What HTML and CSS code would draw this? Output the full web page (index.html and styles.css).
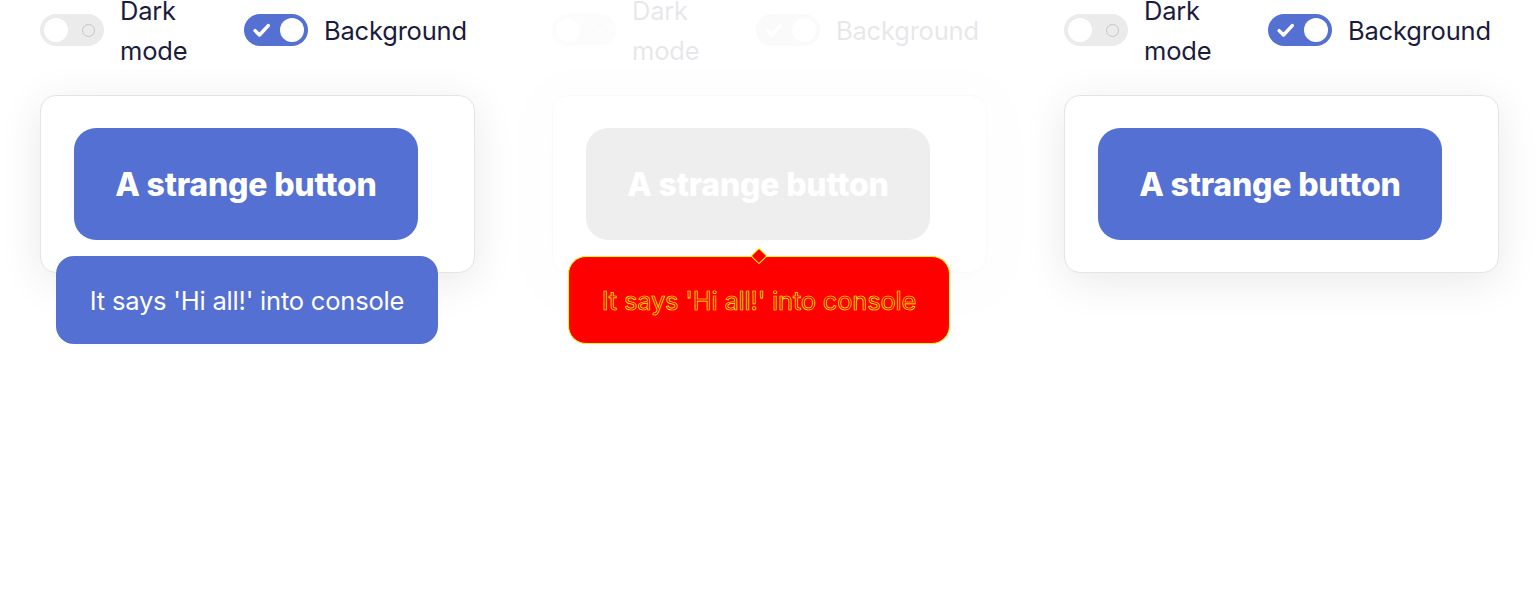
FILE: index.html
```html
<!DOCTYPE html>
<html>
<head>
<meta charset="utf-8">
<link rel="stylesheet" href="styles.css">
</head>
<body>
<div class="panels">
  <section class="panel">
    <div class="toolbar">
      <div class="switch-group">
        <span class="toggle off"><span class="knob"></span><span class="ring"></span></span>
        <span class="label narrow">Dark mode</span>
      </div>
      <div class="switch-group">
        <span class="toggle on"><svg class="check" viewBox="0 0 16 16"><path d="M2.5 8.5 L6 12 L13 4.5"/></svg><span class="knob"></span></span>
        <span class="label">Background</span>
      </div>
    </div>
    <div class="card">
      <button class="btn">A strange button</button>
    </div>
    <div class="tooltip"><span class="arrow"></span>It says 'Hi all!' into console</div>
  </section>

  <section class="panel">
    <div class="faded">
      <div class="toolbar">
        <div class="switch-group">
          <span class="toggle off"><span class="knob"></span><span class="ring"></span></span>
          <span class="label narrow">Dark mode</span>
        </div>
        <div class="switch-group">
          <span class="toggle on gray"><svg class="check" viewBox="0 0 16 16"><path d="M2.5 8.5 L6 12 L13 4.5"/></svg><span class="knob"></span></span>
          <span class="label">Background</span>
        </div>
      </div>
      <div class="card">
        <button class="btn gray">A strange button</button>
      </div>
    </div>
    <div class="tooltip diff"><span class="arrow"></span>It says 'Hi all!' into console</div>
  </section>

  <section class="panel">
    <div class="toolbar">
      <div class="switch-group">
        <span class="toggle off"><span class="knob"></span><span class="ring"></span></span>
        <span class="label narrow">Dark mode</span>
      </div>
      <div class="switch-group">
        <span class="toggle on"><svg class="check" viewBox="0 0 16 16"><path d="M2.5 8.5 L6 12 L13 4.5"/></svg><span class="knob"></span></span>
        <span class="label">Background</span>
      </div>
    </div>
    <div class="card">
      <button class="btn">A strange button</button>
    </div>
  </section>
</div>
</body>
</html>
```
FILE: styles.css
```css
* { box-sizing: border-box; }
html, body { margin: 0; padding: 0; background: #fff; }
body {
  font-family: Inter, "Noto Sans", "Liberation Sans", sans-serif;
  color: #1b1c3b;
  width: 1536px;
  height: 600px;
  overflow: hidden;
}
.panels {
  display: grid;
  grid-template-columns: repeat(3, 512px);
}
.panel {
  position: relative;
  padding-left: 40px;
  height: 600px;
}
.toolbar {
  display: flex;
  align-items: center;
  height: 60px;
  gap: 40px;
}
.switch-group {
  display: flex;
  align-items: center;
  gap: 16px;
}
.label {
  font-size: 25.5px;
  line-height: 40px;
  letter-spacing: -0.2px;
  padding-top: 2px;
}
.label.narrow { width: 84px; }
.toggle {
  position: relative;
  display: flex;
  align-items: center;
  justify-content: space-between;
  width: 64px;
  height: 32px;
  border-radius: 16px;
  padding: 0 4px;
  flex: none;
}
.toggle.off { background: #ebebeb; }
.toggle.on { background: #5470d3; padding-left: 8px; }
.toggle.on.gray { background: #d6d6d6; }
.knob {
  width: 24px;
  height: 24px;
  border-radius: 50%;
  background: #fff;
}
.ring {
  width: 13px;
  height: 13px;
  border-radius: 50%;
  border: 1.5px solid #c6c6c6;
  margin-right: 5px;
}
.check {
  width: 20px;
  height: 20px;
  fill: none;
  stroke: #fff;
  stroke-width: 2.8;
  stroke-linecap: round;
  stroke-linejoin: round;
}
.card {
  margin-top: 35px;
  width: 435px;
  height: 178px;
  border: 1.5px solid #e4e4e4;
  border-radius: 16px;
  background: #fff;
  padding: 32px 0 0 33px;
  box-shadow: 0 8px 44px rgba(0, 0, 0, 0.09);
}
.btn {
  width: 344px;
  height: 112px;
  border: none;
  border-radius: 22px;
  background: #5470d3;
  color: #fff;
  font-family: inherit;
  font-size: 32px;
  font-weight: 800;
  letter-spacing: -0.2px;
  padding: 0;
}
.btn.gray { background: #676767; color: #fff; }
.faded { opacity: 0.1; }
.faded .card { border-color: #d0d0d0; }
.tooltip {
  position: absolute;
  left: 56px;
  top: 256px;
  width: 382px;
  height: 88px;
  border-radius: 18px;
  background: #5470d3;
  color: #fff;
  font-size: 25.5px;
  letter-spacing: -0.2px;
  display: flex;
  align-items: center;
  justify-content: center;
}
.arrow {
  position: absolute;
  left: 185px;
  top: -6px;
  width: 12px;
  height: 12px;
  background: inherit;
  transform: rotate(45deg);
  border-radius: 2px;
  z-index: -1;
}
.tooltip.diff {
  background: #ff0000;
  color: #ff0000;
  border: 1px solid #ffff00;
  -webkit-text-stroke: 0.7px #ffff00;
  z-index: 1;
}
.tooltip.diff .arrow {
  background: #ff0000;
  border: 1px solid #ffff00;
  z-index: 1;
  top: -7px;
  left: 184px;
}
```
